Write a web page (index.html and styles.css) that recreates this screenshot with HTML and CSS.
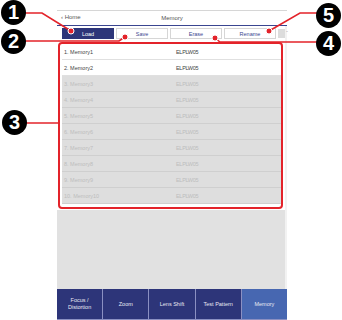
FILE: index.html
```html
<!DOCTYPE html>
<html>
<head>
<meta charset="utf-8">
<link rel="stylesheet" href="styles.css">
</head>
<body>
<div class="page">
  <div class="gutter"></div>
  <div class="screen">
    <div class="header">
      <span class="back">&lsaquo; Home</span>
      <span class="title">Memory</span>
    </div>
    <div class="body">
      <div class="main">
        <div class="tabs">
          <div class="tab active">Load</div>
          <div class="tab">Save</div>
          <div class="tab">Erase</div>
          <div class="tab">Rename</div>
          <div class="thumb"></div>
        </div>
        <div class="list">
          <div class="row on"><span class="name">1. Memory1</span><span class="lamp">ELPLW05</span></div>
          <div class="row on"><span class="name">2. Memory2</span><span class="lamp">ELPLW05</span></div>
          <div class="row off"><span class="name">3. Memory3</span><span class="lamp">ELPLW05</span></div>
          <div class="row off"><span class="name">4. Memory4</span><span class="lamp">ELPLW05</span></div>
          <div class="row off"><span class="name">5. Memory5</span><span class="lamp">ELPLW05</span></div>
          <div class="row off"><span class="name">6. Memory6</span><span class="lamp">ELPLW05</span></div>
          <div class="row off"><span class="name">7. Memory7</span><span class="lamp">ELPLW05</span></div>
          <div class="row off"><span class="name">8. Memory8</span><span class="lamp">ELPLW05</span></div>
          <div class="row off"><span class="name">9. Memory9</span><span class="lamp">ELPLW05</span></div>
          <div class="row off"><span class="name">10. Memory10</span><span class="lamp">ELPLW05</span></div>
        </div>
        <div class="fill"></div>
      </div>
      <div class="scroll"><span class="dash">-</span></div>
    </div>
    <div class="nav">
      <div class="navbtn">Focus /<br>Distortion</div>
      <div class="navbtn">Zoom</div>
      <div class="navbtn">Lens Shift</div>
      <div class="navbtn">Test Pattern</div>
      <div class="navbtn current">Memory</div>
    </div>
  </div>
</div>

<div class="hilite"></div>
<svg class="leaders" width="342" height="320" viewBox="0 0 342 320">
  <g fill="none" stroke="#e3232a" stroke-width="1.6">
    <polyline points="24,13 42,13 71,31"/>
    <polyline points="24,41 119,41 125,37"/>
    <polyline points="25,123 58,123"/>
    <polyline points="317,42 220,42 215,38"/>
    <polyline points="317,13 300,13 269,31"/>
  </g>
  <g fill="#e3232a" stroke="#fff" stroke-width="1">
    <circle cx="71" cy="31" r="3"/>
    <circle cx="125" cy="37" r="3"/>
    <circle cx="215" cy="38" r="3"/>
    <circle cx="269" cy="31" r="3"/>
  </g>
</svg>
<div class="callout c1">1</div>
<div class="callout c2">2</div>
<div class="callout c3">3</div>
<div class="callout c4">4</div>
<div class="callout c5">5</div>
</body>
</html>
```

FILE: styles.css
```css
html, body {
  margin: 0;
  padding: 0;
  background: #fff;
}
body {
  width: 342px;
  height: 320px;
  position: relative;
  overflow: hidden;
  font-family: "Liberation Sans", Arial, sans-serif;
}
.page {
  display: flex;
  height: 320px;
}
.gutter {
  width: 57px;
  flex: none;
}
.screen {
  width: 230px;
  margin-top: 10px;
  border-top: 1px solid #d6d6d6;
  display: flex;
  flex-direction: column;
  height: 309px;
}
.header {
  height: 14px;
  border-bottom: 1px solid #3a4590;
  position: relative;
  display: flex;
  align-items: center;
  justify-content: center;
  font-size: 6px;
  color: #555;
}
.back {
  position: absolute;
  left: 4px;
  top: 3px;
  color: #555;
}
.title {
  color: #555;
}
.body {
  flex: 1;
  display: flex;
}
.main {
  flex: 1;
  display: flex;
  flex-direction: column;
}
.scroll {
  width: 5px;
  background: #f2f2f2;
  position: relative;
}
.dash {
  position: absolute;
  top: 2px;
  left: 1px;
  font-size: 6px;
  color: #999;
}
.tabs {
  display: flex;
  gap: 2px;
  padding: 2px 0 0 5px;
  height: 14px;
  background: #fff;
}
.tab {
  width: 50px;
  height: 9px;
  border: 1px solid #d6d6d6;
  font-size: 5.5px;
  color: #3a4590;
  display: flex;
  align-items: center;
  justify-content: center;
  background: #fff;
}
.tab.active {
  background: #2d3579;
  border-color: #2d3579;
  color: #fff;
}
.thumb {
  width: 7px;
  height: 9px;
  margin-top: 1px;
  background: #dcdcdc;
}
.list {
  background: #fff;
  padding: 2px 3px 6px 5px;
  display: flex;
  flex-direction: column;
}
.row {
  height: 15px;
  border-bottom: 1px solid #d2d2d2;
  display: flex;
  align-items: center;
  font-size: 5.5px;
}
.row.on {
  background: #fff;
  color: #444;
  border-bottom-color: #e0e0e0;
}
.row.off {
  background: #dedede;
  color: #bdbdbd;
  border-bottom-color: #cfcfcf;
}
.name {
  width: 112px;
  padding-left: 2px;
}
.lamp {
  letter-spacing: -0.3px;
}
.fill {
  flex: 1;
  background: #e1e1e1;
}
.nav {
  height: 30px;
  display: grid;
  grid-template-columns: repeat(5, 1fr);
  gap: 1px;
  background: #8b90c2;
  border-bottom: 1px solid #8b90c2;
}
.navbtn {
  background: #2d3579;
  color: #e8e9f3;
  font-size: 5.5px;
  line-height: 7px;
  display: flex;
  align-items: center;
  justify-content: center;
  text-align: center;
}
.navbtn.current {
  background: #4767b1;
}
.hilite {
  position: absolute;
  left: 58px;
  top: 42px;
  width: 221px;
  height: 163px;
  border: 2px solid #e3232a;
  border-radius: 4px;
}
.leaders {
  position: absolute;
  left: 0;
  top: 0;
  pointer-events: none;
}
.callout {
  position: absolute;
  width: 25px;
  height: 25px;
  border-radius: 50%;
  background: #000;
  color: #fff;
  font-weight: bold;
  font-size: 20px;
  line-height: 25px;
  text-align: center;
}
.c1 { left: 1px; top: 0px; }
.c2 { left: 1px; top: 29px; }
.c3 { left: 2px; top: 110px; }
.c4 { left: 316px; top: 31px; }
.c5 { left: 316px; top: 3px; }
```
